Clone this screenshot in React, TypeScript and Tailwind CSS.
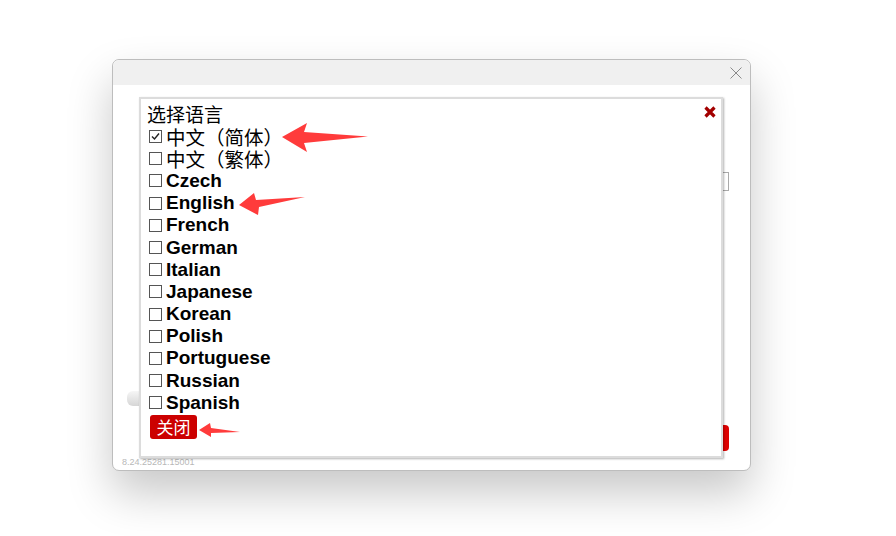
const LANGS = [
  { label: "中文（简体）", cjk: true, checked: true },
  { label: "中文（繁体）", cjk: true },
  { label: "Czech" },
  { label: "English" },
  { label: "French" },
  { label: "German" },
  { label: "Italian" },
  { label: "Japanese" },
  { label: "Korean" },
  { label: "Polish" },
  { label: "Portuguese" },
  { label: "Russian" },
  { label: "Spanish" },
]

function Box({ checked }: { checked?: boolean }) {
  return (
    <span className="ml-[2px] mr-[4px] flex h-[13px] w-[13px] shrink-0 items-center justify-center border border-[#555] bg-white">
      {checked && (
        <svg width="11" height="11" viewBox="0 0 11 11">
          <path d="M2 5.5 L4.5 8 L9 2.5" fill="none" stroke="#222" strokeWidth="1.4" />
        </svg>
      )}
    </span>
  )
}

function LanguagePopup() {
  return (
    <div className="absolute left-[26px] top-[37px] h-[361px] w-[584px] border-2 border-[#dcdcdc] bg-white px-[6px] pt-[4px] shadow-[1px_1px_2px_rgba(0,0,0,0.3)]">
      <div className="flex h-[22px] items-center justify-between">
        <span className="text-[19px] leading-[20px] text-black" style={{ fontFamily: '"Noto Sans CJK SC", serif' }}>
          选择语言
        </span>
        <svg width="12" height="12" viewBox="0 0 12 12" className="mr-[-1px] mt-[-4px]">
          <path d="M1.5 1.5 L10.5 10.5 M10.5 1.5 L1.5 10.5" stroke="#a30000" strokeWidth="3.2" />
        </svg>
      </div>
      <div className="flex flex-col pt-[0.5px]">
        {LANGS.map((l) => (
          <div key={l.label} className="flex h-[22.2px] items-center">
            <Box checked={l.checked} />
            {l.cjk ? (
              <span className="text-[19.5px] leading-[20px] text-black" style={{ fontFamily: '"Noto Sans CJK SC", serif' }}>
                {l.label}
              </span>
            ) : (
              <span className="font-['Liberation_Sans',Arial,sans-serif] text-[19px] font-bold leading-[22px] text-black">
                {l.label}
              </span>
            )}
          </div>
        ))}
      </div>
      <button
        className="ml-[3px] mt-[1px] flex h-[24px] w-[47px] items-center justify-center rounded-[3px] bg-[#cc0000] text-[17px] leading-[20px] text-white"
        style={{ fontFamily: '"Noto Sans CJK SC", serif' }}
      >
        关闭
      </button>
    </div>
  )
}

function Arrows() {
  return (
    <svg className="pointer-events-none absolute left-0 top-0" width="896" height="536" viewBox="0 0 896 536">
      <polygon points="282,137 307,123 304,132 368,136.5 304,143 307,152" fill="#ff3b3b" />
      <polygon points="239,205 254,193 256,200 305,197 259,207 258,215" fill="#ff3b3b" />
      <polygon points="199,430 210,423 211,428 240,432 211,433 211,437" fill="#ff3b3b" />
    </svg>
  )
}

export default function App() {
  return (
    <div className="relative h-[536px] w-[896px] overflow-hidden bg-white">
      <div className="ml-[112px] mt-[59px] w-[639px]">
        <div className="relative flex h-[412px] flex-col rounded-[7px] border border-[#bdbdbd] bg-white shadow-[0_22px_45px_rgba(0,0,0,0.22)]">
          <div className="flex h-[25px] shrink-0 items-center justify-end rounded-t-[7px] bg-[#f0f0f0] pr-[8px]">
            <svg width="12" height="12" viewBox="0 0 12 12">
              <path d="M0.5 0.5 L11.5 11.5 M11.5 0.5 L0.5 11.5" stroke="#8a8a8a" strokeWidth="1" />
            </svg>
          </div>
          {/* dialog content mostly hidden behind the popup */}
          <div className="flex flex-1 flex-col pl-[14px] pr-[21px]">
            <div className="ml-auto mt-[87px] h-[19px] w-[300px] border border-[#aaa]" />
            <div className="mt-[200px] h-[15px] w-[40px] rounded-l-[6px] bg-gradient-to-b from-[#f6f6f6] to-[#d6d6d6]" />
            <div className="ml-auto mt-[19px] h-[26px] w-[60px] rounded-[4px] bg-[#dd0000]" />
            <div className="mt-auto pb-[3px] font-['Liberation_Sans',Arial,sans-serif] text-[9px] leading-[10px] text-[#b8b8b8]">
              <span className="ml-[-5px]">8.24.25281.15001</span>
            </div>
          </div>
          <LanguagePopup />
        </div>
      </div>
      <Arrows />
    </div>
  )
}
